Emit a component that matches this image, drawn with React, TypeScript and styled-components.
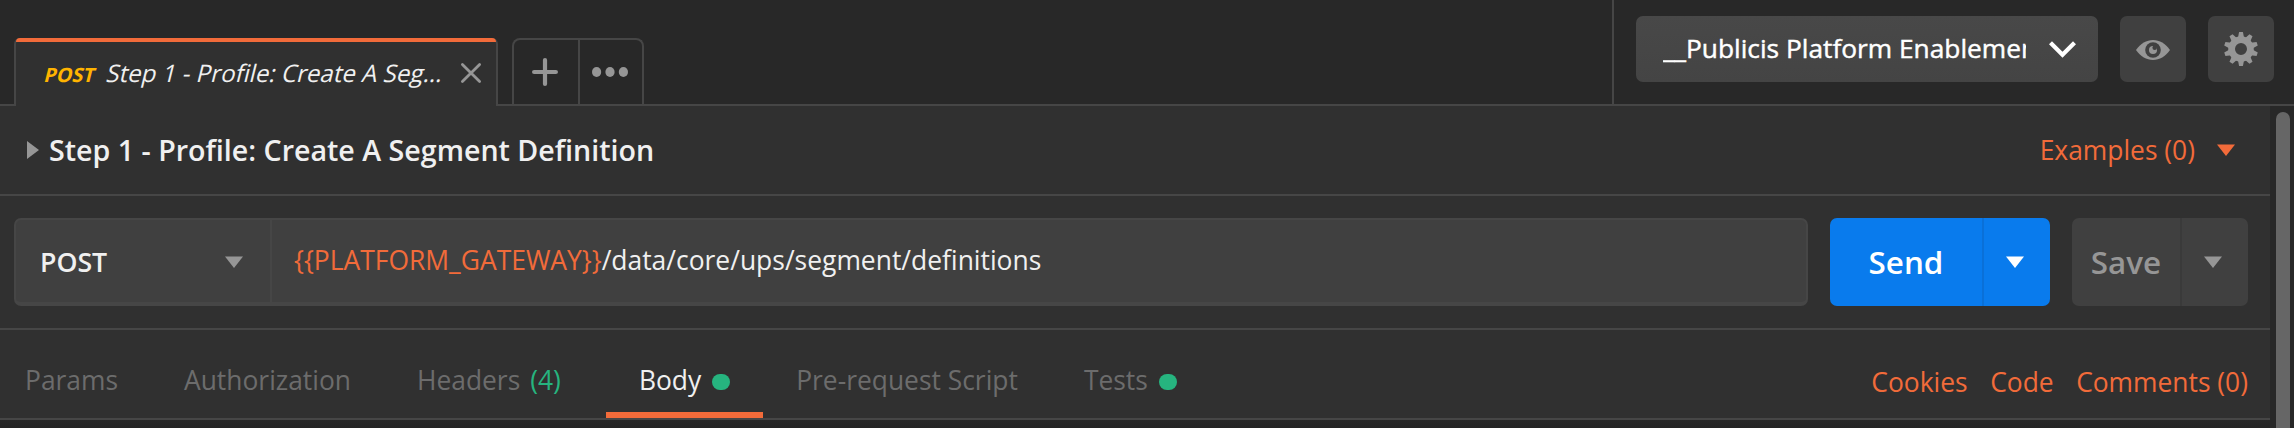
import React from 'react';
import styled, { createGlobalStyle } from 'styled-components';

const color = {
  base: '#282828',
  panel: '#303030',
  field: '#404040',
  line: '#464646',
  accent: '#f26b3a',
  green: '#26b47f',
  blue: '#097bed',
  icon: '#969696',
  muted: '#6c6c6c',
  text: '#f0f0f0',
};

const GlobalStyle = createGlobalStyle`
  * { box-sizing: border-box; }
  body { margin: 0; background: ${color.base}; }
`;

const Window = styled.div`
  display: flex;
  flex-direction: column;
  width: 2294px;
  height: 428px;
  overflow: hidden;
  background: ${color.base};
  color: ${color.text};
  font: 400 26.4px 'Open Sans', sans-serif;
  white-space: nowrap;
`;

const TopBar = styled.header`
  display: flex;
  flex: none;
  height: 106px;
  border-bottom: 2px solid ${color.line};
`;

const TabStrip = styled.div`
  display: flex;
  flex: none;
  align-items: flex-end;
  width: 1612px;
  padding-left: 14px;
`;

const RequestTab = styled.div`
  display: flex;
  flex-direction: column;
  width: 484px;
  height: 68px;
  margin-bottom: -2px;
  padding-bottom: 2px;
  background: ${color.panel};
  border: solid ${color.line};
  border-width: 0 2px;
  border-radius: 6px 6px 0 0;
`;

const TabAccent = styled.div`
  height: 4px;
  background: ${color.accent};
  border-radius: 4px 4px 0 0;
`;

const TabContent = styled.div`
  display: flex;
  flex: 1;
  align-items: center;
  justify-content: space-between;
  padding: 0 14px 0 27px;
`;

const TabLabel = styled.div`
  display: flex;
  align-items: baseline;
  padding-bottom: 2px;
`;

const Slanted = styled.span`
  display: inline-block;
  transform: skewX(-14deg);
  transform-origin: 0 78%;
`;

const TabMethod = styled(Slanted)`
  width: 62px;
  color: #ffb400;
  font-size: 19.8px;
  font-weight: 700;
`;

const TabTitle = styled(Slanted)`
  font-size: 24.1px;
`;

const TabActions = styled.div`
  display: flex;
  width: 132px;
  height: 66px;
  margin-left: 14px;
  border: 2px solid ${color.line};
  border-bottom: 0;
  border-radius: 8px 8px 0 0;
`;

const TabAction = styled.div`
  display: flex;
  flex: 1;
  align-items: center;
  justify-content: center;
  padding: 0 2px 0 0;

  & + & {
    flex: 0 0 64px;
    border-left: 2px solid ${color.line};
  }
`;

const Environment = styled.div`
  display: flex;
  flex: 1;
  gap: 22px;
  padding: 16px 20px 0 22px;
  border-left: 2px solid ${color.line};
`;

const EnvironmentSelect = styled.div`
  display: flex;
  align-items: center;
  justify-content: space-between;
  width: 462px;
  height: 66px;
  padding: 0 22px 0 27px;
  background: linear-gradient(#484848, #444444);
  border-radius: 7px;
  color: #fff;
`;

const EnvironmentName = styled.span`
  width: 363px;
  overflow: hidden;
  padding-bottom: 3px;
  font-size: 26.3px;
  -webkit-text-stroke: 0.45px #fff;
`;

const IconButton = styled.div`
  display: flex;
  align-items: center;
  justify-content: center;
  width: 66px;
  height: 66px;
  background: ${color.field};
  border-radius: 7px;
`;

const Body = styled.div`
  display: flex;
  flex: 1;
  min-height: 0;
`;

const Main = styled.main`
  width: 2270px;
  background: ${color.panel};
`;

const ScrollTrack = styled.div`
  flex: 1;
  padding: 6px 4px 0 6px;
`;

const ScrollThumb = styled.div`
  height: 360px;
  background: #666;
  border-radius: 7px;
`;

const TitleRow = styled.div`
  display: flex;
  align-items: center;
  height: 90px;
  padding: 0 35px 0 27px;
  border-bottom: 2px solid ${color.line};
`;

const RequestTitle = styled.h1`
  flex: 1;
  margin: 0 0 0 10px;
  padding-bottom: 2px;
  font-size: 28.6px;
  font-weight: 600;
`;

const Examples = styled.div`
  display: flex;
  align-items: center;
  gap: 22px;
  color: ${color.accent};
`;

const UrlRow = styled.div`
  display: flex;
  height: 134px;
  padding: 22px 22px 22px 14px;
  border-bottom: 2px solid ${color.line};
`;

const UrlField = styled.div`
  display: flex;
  width: 1794px;
  background: ${color.field};
  border: solid ${color.line};
  border-width: 2px 2px 4px;
  border-radius: 7px;
`;

const MethodSelect = styled.div`
  display: flex;
  align-items: center;
  justify-content: space-between;
  width: 256px;
  padding: 2px 27px 0 24px;
  border-right: 2px solid ${color.line};
  font-size: 26.7px;
  font-weight: 600;
`;

const MethodName = styled.span`
  padding-bottom: 2px;
`;

const UrlInput = styled.div`
  display: flex;
  align-items: center;
  padding: 0 0 2px 22px;
  font-size: 26.45px;
`;

const Variable = styled.span`
  color: ${color.accent};
`;

const SplitButton = styled.div<{ $primary?: boolean }>`
  display: flex;
  width: ${p => (p.$primary ? 220 : 176)}px;
  margin-left: 22px;
  background: ${p => (p.$primary ? color.blue : color.field)};
  border-radius: 7px;
  color: ${p => (p.$primary ? '#fff' : color.icon)};
  font-size: 31.4px;
  font-weight: 600;
`;

const SplitLabel = styled.div`
  display: flex;
  flex: 1;
  align-items: center;
  justify-content: center;
  padding-bottom: 1px;
`;

const SplitArrow = styled.div<{ $primary?: boolean }>`
  display: flex;
  align-items: center;
  justify-content: center;
  width: 68px;
  padding-right: 4px;
  border-left: 2px solid ${p => (p.$primary ? '#0a70d8' : '#3a3a3a')};
`;

const SectionRow = styled.div`
  display: flex;
  justify-content: space-between;
  height: 90px;
  padding-right: 22px;
  border-bottom: 2px solid ${color.line};
`;

const Sections = styled.nav`
  display: flex;
  margin-left: -8px;
`;

const Section = styled.div<{ $active?: boolean }>`
  display: flex;
  align-items: center;
  padding: 18px 33px 0 33px;
  border-bottom: 6px solid ${p => (p.$active ? color.accent : 'transparent')};
  color: ${p => (p.$active ? color.text : color.muted)};
`;

const Count = styled.span`
  margin: 0 12px 0 10px;
  color: ${color.green};
`;

const Dot = styled.span`
  width: 18px;
  height: 16px;
  margin: 4px 0 0 11px;
  background: ${color.green};
  border-radius: 8px;
`;

const Links = styled.div`
  display: flex;
  align-items: center;
  gap: 22.5px;
  padding-top: 15px;
  color: ${color.accent};
`;

const Footer = styled.div`
  height: 8px;
  background: linear-gradient(#282828, #242424);
`;

const DownArrow = ({ fill = 'currentColor' }: { fill?: string }) => (
  <svg width="18" height="12" viewBox="0 0 18 12">
    <path d="M0 .5h18L9 12z" fill={fill} />
  </svg>
);

const RightArrow = () => (
  <svg width="12" height="18" viewBox="0 0 12 18">
    <path d="M0 0v18l12-9z" fill={color.icon} />
  </svg>
);

const CloseIcon = () => (
  <svg width="22" height="22" viewBox="0 0 22 22" stroke={color.icon} strokeWidth="2.8" strokeLinecap="round">
    <path d="M2.4 2.4l17.2 17.2M19.6 2.4L2.4 19.6" />
  </svg>
);

const PlusIcon = () => (
  <svg width="26" height="28" viewBox="0 0 26 28" stroke={color.icon} strokeWidth="4.2" strokeLinecap="round">
    <path d="M13 2.1v23.8M2.1 14h21.8" />
  </svg>
);

const MoreIcon = () => (
  <svg width="36" height="10" viewBox="0 0 36 10" fill={color.icon}>
    <ellipse cx="4.6" cy="5" rx="4.6" ry="4.9" />
    <ellipse cx="18" cy="5" rx="4.6" ry="4.9" />
    <ellipse cx="31.4" cy="5" rx="4.6" ry="4.9" />
  </svg>
);

const ChevronIcon = () => (
  <svg width="27" height="17" viewBox="0 0 27 17" fill="none" stroke="#fff" strokeWidth="4.2">
    <path d="M1.5 1.7L13.5 13.7L25.5 1.7" />
  </svg>
);

const EyeIcon = () => (
  <svg width="34" height="22" viewBox="0 -2 34 22">
    <path d="M0 10C4.5 3.5 10.5 0 17 0s12.5 3.5 17 10c-4.5 6.5-10.5 10-17 10S4.5 16.5 0 10z" fill={color.icon} />
    <circle cx="17" cy="10" r="7.8" fill={color.field} />
    <circle cx="17" cy="10" r="4" fill={color.icon} />
    <circle cx="18.7" cy="7.8" r="2.3" fill={color.field} />
  </svg>
);

const teeth = Array.from({ length: 10 }, (_, i) => i * 36);

const GearIcon = () => (
  <svg width="34" height="34" viewBox="-17 -17 34 34" fill={color.icon}>
    {teeth.map(angle => (
      <path key={angle} d="M-3.1 -11L-1.9 -17H1.9L3.1 -11z" transform={`rotate(${angle})`} />
    ))}
    <circle r="9.4" fill="none" stroke={color.icon} strokeWidth="6.8" />
  </svg>
);

export default function App() {
  return (
    <Window>
      <GlobalStyle />
      <TopBar>
        <TabStrip>
          <RequestTab>
            <TabAccent />
            <TabContent>
              <TabLabel>
                <TabMethod>POST</TabMethod>
                <TabTitle>Step 1 - Profile: Create A Seg...</TabTitle>
              </TabLabel>
              <CloseIcon />
            </TabContent>
          </RequestTab>
          <TabActions>
            <TabAction><PlusIcon /></TabAction>
            <TabAction><MoreIcon /></TabAction>
          </TabActions>
        </TabStrip>
        <Environment>
          <EnvironmentSelect>
            <EnvironmentName>__Publicis Platform Enablement</EnvironmentName>
            <ChevronIcon />
          </EnvironmentSelect>
          <IconButton><EyeIcon /></IconButton>
          <IconButton><GearIcon /></IconButton>
        </Environment>
      </TopBar>
      <Body>
        <Main>
          <TitleRow>
            <RightArrow />
            <RequestTitle>Step 1 - Profile: Create A Segment Definition</RequestTitle>
            <Examples>
              Examples (0)
              <DownArrow />
            </Examples>
          </TitleRow>
          <UrlRow>
            <UrlField>
              <MethodSelect>
                <MethodName>POST</MethodName>
                <DownArrow fill={color.icon} />
              </MethodSelect>
              <UrlInput>
                <Variable>{'{{PLATFORM_GATEWAY}}'}</Variable>/data/core/ups/segment/definitions
              </UrlInput>
            </UrlField>
            <SplitButton $primary>
              <SplitLabel>Send</SplitLabel>
              <SplitArrow $primary><DownArrow /></SplitArrow>
            </SplitButton>
            <SplitButton>
              <SplitLabel>Save</SplitLabel>
              <SplitArrow><DownArrow /></SplitArrow>
            </SplitButton>
          </UrlRow>
          <SectionRow>
            <Sections>
              <Section>Params</Section>
              <Section>Authorization</Section>
              <Section>Headers<Count>(4)</Count></Section>
              <Section $active>Body<Dot /></Section>
              <Section>Pre-request Script</Section>
              <Section>Tests<Dot /></Section>
            </Sections>
            <Links>
              <span>Cookies</span>
              <span>Code</span>
              <span>Comments (0)</span>
            </Links>
          </SectionRow>
          <Footer />
        </Main>
        <ScrollTrack>
          <ScrollThumb />
        </ScrollTrack>
      </Body>
    </Window>
  );
}
